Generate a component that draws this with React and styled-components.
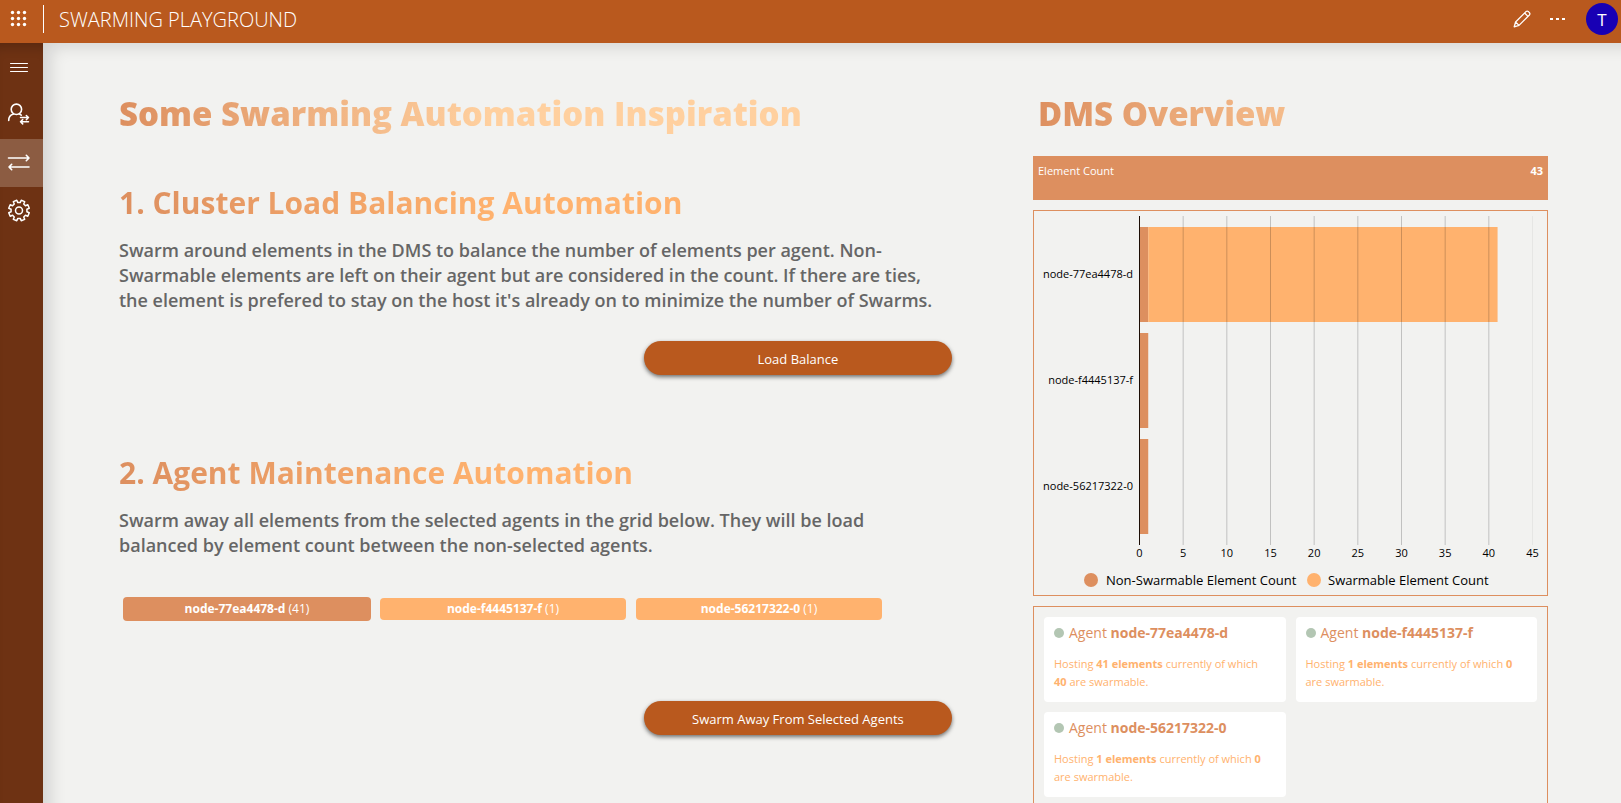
import React, { useState } from 'react';
import styled, { createGlobalStyle } from 'styled-components';

const GlobalStyle = createGlobalStyle`
  *, *::before, *::after { box-sizing: border-box; }
  body { margin: 0; font-family: 'Open Sans', 'Noto Sans', sans-serif; background: #f2f2f0; }
  h1, h2, h3, p, ul { margin: 0; padding: 0; }
  button { font-family: inherit; border: 0; cursor: pointer; }
`;

const Shell = styled.div`
  display: flex;
  flex-direction: column;
  height: 100vh;
`;

const TopBar = styled.header`
  display: flex;
  align-items: center;
  flex: none;
  height: 43px;
  padding: 0 3px 5px 0;
  background: #b9591e;
  color: #fff;
`;

const BarButton = styled.button`
  display: grid;
  place-items: center;
  width: 36px;
  height: 36px;
  padding: 0;
  background: none;
  color: inherit;
`;

const Divider = styled.span`
  width: 1px;
  height: 28px;
  margin: 0 15px 0 7px;
  background: #fff;
`;

const AppName = styled.span`
  flex: 1;
  padding-top: 2px;
  font-size: 20px;
  font-weight: 300;
  line-height: 28px;
`;

const Avatar = styled.button`
  width: 32px;
  height: 32px;
  margin-left: 10px;
  padding: 0;
  border-radius: 50%;
  background: #1800b4;
  color: #fff;
  font-size: 17px;
`;

const Body = styled.div`
  display: flex;
  flex: 1;
  min-height: 0;
`;

const SideBar = styled.nav`
  display: flex;
  flex-direction: column;
  flex: none;
  width: 43px;
  background: #6e3213;
  box-shadow: inset 0 12px 12px -8px rgba(0, 0, 0, 0.2);
`;

const NavButton = styled.button`
  display: grid;
  align-items: center;
  height: 48px;
  padding: 0 0 0 7px;
  background: ${({ $active }) => ($active ? '#8c5c42' : 'none')};
  color: #fff;
`;

const Main = styled.main`
  display: grid;
  grid-template-columns: 833fr 515fr;
  align-items: start;
  gap: 81px;
  flex: 1;
  min-width: 0;
  padding: 47px 73px 40px 76px;
  overflow: hidden auto;
  scrollbar-width: none;
  background: #f2f2f0;
  box-shadow: inset 16px 12px 16px -8px rgba(0, 0, 0, 0.12);
`;

const Title = styled.h1`
  padding-left: ${({ $inset }) => ($inset ? '5px' : '0')};
  background: linear-gradient(to right, #dd8f5f, #ffd09f 370px);
  background-clip: text;
  color: transparent;
  font-size: 33px;
  font-weight: 800;
  line-height: 48px;
`;

const SectionTitle = styled.h2`
  background: linear-gradient(to right, #dd8f5f, #ffb26e 380px);
  background-clip: text;
  color: transparent;
  font-size: 30px;
  font-weight: 700;
  line-height: 40px;
`;

const Section = styled.section`
  display: flex;
  flex-direction: column;
  margin-top: ${({ $first }) => ($first ? '45px' : '78px')};
`;

const Lead = styled.p`
  margin-top: 15px;
  padding-right: 10px;
  color: #666;
  font-size: 18px;
  font-weight: 600;
  line-height: 25px;
`;

const ActionButton = styled.button`
  align-self: flex-end;
  width: 37%;
  height: 34px;
  margin-top: ${({ $spaced }) => ($spaced ? '80px' : '28px')};
  padding: 2px 0 0;
  border-radius: 17px;
  background: #b9591e;
  box-shadow: 0 2px 4px rgba(0, 0, 0, 0.55);
  color: #fff;
  font-size: 13px;
`;

const ChipRow = styled.div`
  display: grid;
  grid-template-columns: repeat(3, 1fr);
  align-items: center;
  gap: 8px;
  height: 24px;
  margin: 39px 69px 0 4px;
`;

const Chip = styled.button`
  height: ${({ $selected }) => ($selected ? '24px' : '22px')};
  margin: ${({ $selected }) => ($selected ? '0' : '0 1px')};
  padding: 0;
  border-radius: 4px;
  background: ${({ $selected }) => ($selected ? '#dd8f5f' : '#ffb26e')};
  color: #fff;
  font-size: 12px;
  line-height: 22px;
`;

const Overview = styled.aside`
  min-width: 0;
`;

const CountCard = styled.div`
  display: flex;
  justify-content: space-between;
  height: 44px;
  margin-top: 18px;
  padding: 5px;
  background: #dd8f5f;
  color: #fff;
  font-size: 11px;
  line-height: 20px;
`;

const Panel = styled.section`
  margin-top: 10px;
  border: 1px solid #dd8f5f;
`;

const ChartSvg = styled.svg`
  display: block;
  width: 100%;
  height: auto;
  font-size: 11px;
`;

const Legend = styled.text`
  font-size: 13px;
`;

const AgentGrid = styled.ul`
  display: grid;
  grid-template-columns: 1fr 1fr;
  gap: 10px;
  padding: 10px 10px 40px;
  list-style: none;
`;

const AgentCard = styled.li`
  padding: 5px 16px 11px 10px;
  border-radius: 4px;
  background: #fff;
  color: #ffb26e;
  font-size: 11px;
  line-height: 18px;
`;

const AgentName = styled.h3`
  display: flex;
  align-items: center;
  gap: 5px;
  margin-bottom: 11px;
  color: #dd8f5f;
  font-size: 14px;
  font-weight: 400;
  line-height: 22px;
`;

const Dot = styled.span`
  width: 10px;
  height: 10px;
  border-radius: 50%;
  background: #b3c6b3;
`;

const nodes = [
  { name: 'node-77ea4478-d', total: 41, swarmable: 40 },
  { name: 'node-f4445137-f', total: 1, swarmable: 0 },
  { name: 'node-56217322-0', total: 1, swarmable: 0 },
];

const AXIS_X = 105.5;
const UNIT = 393 / 45;

function Chart() {
  const ticks = [0, 5, 10, 15, 20, 25, 30, 35, 40, 45];
  return (
    <ChartSvg viewBox="0 0 513 384" role="img" aria-label="Elements per agent">
      {nodes.map((n, i) => {
        const fixed = n.total - n.swarmable;
        const y = 16 + i * 106;
        return (
          <g key={n.name}>
            <rect x={AXIS_X} y={y} width={fixed * UNIT} height="95" fill="#dd8f5f" />
            <rect x={AXIS_X + fixed * UNIT} y={y} width={n.swarmable * UNIT} height="95" fill="#ffb26e" />
            <text x="99" y={y + 51} textAnchor="end">{n.name}</text>
          </g>
        );
      })}
      {ticks.map((t) => (
        <g key={t}>
          <line
            x1={AXIS_X + t * UNIT}
            x2={AXIS_X + t * UNIT}
            y1="5"
            y2="334"
            stroke={t === 0 ? '#1c0d05' : t === 45 ? '#e6e6e4' : 'rgba(0, 0, 0, 0.2)'}
          />
          <text x={AXIS_X + t * UNIT} y="346" textAnchor="middle">{t}</text>
        </g>
      ))}
      <circle cx="57" cy="369" r="7" fill="#dd8f5f" />
      <Legend x="72" y="374">Non-Swarmable Element Count</Legend>
      <circle cx="280" cy="369" r="7" fill="#ffb26e" />
      <Legend x="294" y="374">Swarmable Element Count</Legend>
    </ChartSvg>
  );
}

const stroke = { fill: 'none', stroke: 'currentColor', strokeLinecap: 'round', strokeLinejoin: 'round' };

const WaffleIcon = () => (
  <svg width="18" height="18" viewBox="0 0 18 18" fill="currentColor" aria-hidden="true">
    {[3, 9, 15].map((y) => [3, 9, 15].map((x) => <circle key={`${x}-${y}`} cx={x + 0.5} cy={y - 0.5} r="1.7" />))}
  </svg>
);

const PencilIcon = () => (
  <svg width="20" height="20" viewBox="0 0 20 20" {...stroke} strokeWidth="1.3" aria-hidden="true">
    <path d="M2.2 17.8 3.6 13 14 2.6q1.2-1 2.4 0l1 1q1 1.2 0 2.4L7 16.4zM12.6 4l3.4 3.4M3.6 13 7 16.4" />
  </svg>
);

const MoreIcon = () => (
  <svg width="18" height="4" viewBox="0 0 18 4" fill="currentColor" aria-hidden="true">
    <path d="M1 1h3v2H1zM7 1h3v2H7zM13 1h3v2h-3z" />
  </svg>
);

const MenuIcon = () => (
  <svg width="24" height="24" viewBox="0 0 24 24" {...stroke} aria-hidden="true">
    <path d="M3.5 8.5h17M3.5 12.5h17M3.5 16.5h17" />
  </svg>
);

const UserSwapIcon = () => (
  <svg width="24" height="24" viewBox="0 0 24 24" {...stroke} strokeWidth="1.6" aria-hidden="true">
    <circle cx="9.4" cy="6.3" r="5.2" />
    <path d="M1.7 17.5c0-3.5 2-5.6 4.8-6.4M12.3 11q1.3.4 2 1.2" />
    <path d="M13.5 14.5h8M19.3 12.5l2.2 2-2.2 2.2M21.5 18.7h-8M15.7 16.6l-2.2 2.1 2.2 2.2" strokeWidth="1.5" />
  </svg>
);

const SwapIcon = () => (
  <svg width="24" height="24" viewBox="0 0 24 24" {...stroke} strokeWidth="1.6" aria-hidden="true">
    <path d="M1.5 7h20M19.3 4.3 22 7l-2.7 2.7M22 16H2M4.7 13.3 2 16l2.7 2.7" />
  </svg>
);

const GearIcon = () => {
  const points = [];
  for (let i = 0; i < 8; i += 1) {
    const a = ((i + 0.5) * Math.PI) / 4;
    [[-0.24, 8], [-0.18, 10.5], [0.18, 10.5], [0.24, 8]].forEach(([d, r]) => {
      points.push(`${(12 + r * Math.sin(a + d)).toFixed(2)},${(11.5 - r * Math.cos(a + d)).toFixed(2)}`);
    });
  }
  return (
    <svg width="24" height="24" viewBox="0 0 24 24" {...stroke} strokeWidth="1.5" aria-hidden="true">
      <polygon points={points.join(' ')} />
      <circle cx="12" cy="11.5" r="3.5" />
    </svg>
  );
};

export default function App() {
  const [selected, setSelected] = useState([nodes[0].name]);
  const toggle = (name) =>
    setSelected((s) => (s.includes(name) ? s.filter((n) => n !== name) : [...s, name]));

  return (
    <Shell>
      <GlobalStyle />
      <TopBar>
        <BarButton aria-label="Apps"><WaffleIcon /></BarButton>
        <Divider />
        <AppName>SWARMING PLAYGROUND</AppName>
        <BarButton aria-label="Edit"><PencilIcon /></BarButton>
        <BarButton aria-label="More"><MoreIcon /></BarButton>
        <Avatar aria-label="Account">T</Avatar>
      </TopBar>
      <Body>
        <SideBar>
          <NavButton aria-label="Menu"><MenuIcon /></NavButton>
          <NavButton aria-label="Swarm agents"><UserSwapIcon /></NavButton>
          <NavButton aria-label="Automation" $active><SwapIcon /></NavButton>
          <NavButton aria-label="Settings"><GearIcon /></NavButton>
        </SideBar>
        <Main>
          <div>
            <Title>Some Swarming Automation Inspiration</Title>
            <Section $first>
              <SectionTitle>1. Cluster Load Balancing Automation</SectionTitle>
              <Lead>
                Swarm around elements in the DMS to balance the number of elements per agent. Non-Swarmable
                elements are left on their agent but are considered in the count. If there are ties, the
                element is prefered to stay on the host it's already on to minimize the number of Swarms.
              </Lead>
              <ActionButton>Load Balance</ActionButton>
            </Section>
            <Section>
              <SectionTitle>2. Agent Maintenance Automation</SectionTitle>
              <Lead>
                Swarm away all elements from the selected agents in the grid below. They will be load
                balanced by element count between the non-selected agents.
              </Lead>
              <ChipRow>
                {nodes.map((n) => (
                  <Chip
                    key={n.name}
                    $selected={selected.includes(n.name)}
                    aria-pressed={selected.includes(n.name)}
                    onClick={() => toggle(n.name)}
                  >
                    <b>{n.name}</b> ({n.total})
                  </Chip>
                ))}
              </ChipRow>
              <ActionButton $spaced>Swarm Away From Selected Agents</ActionButton>
            </Section>
          </div>
          <Overview>
            <Title $inset>DMS Overview</Title>
            <CountCard>
              <span>Element Count</span>
              <b>43</b>
            </CountCard>
            <Panel>
              <Chart />
            </Panel>
            <Panel>
              <AgentGrid>
                {nodes.map((n) => (
                  <AgentCard key={n.name}>
                    <AgentName>
                      <Dot />
                      <span>Agent <b>{n.name}</b></span>
                    </AgentName>
                    <p>
                      Hosting <b>{n.total} elements</b> currently of which <b>{n.swarmable}</b> are swarmable.
                    </p>
                  </AgentCard>
                ))}
              </AgentGrid>
            </Panel>
          </Overview>
        </Main>
      </Body>
    </Shell>
  );
}
